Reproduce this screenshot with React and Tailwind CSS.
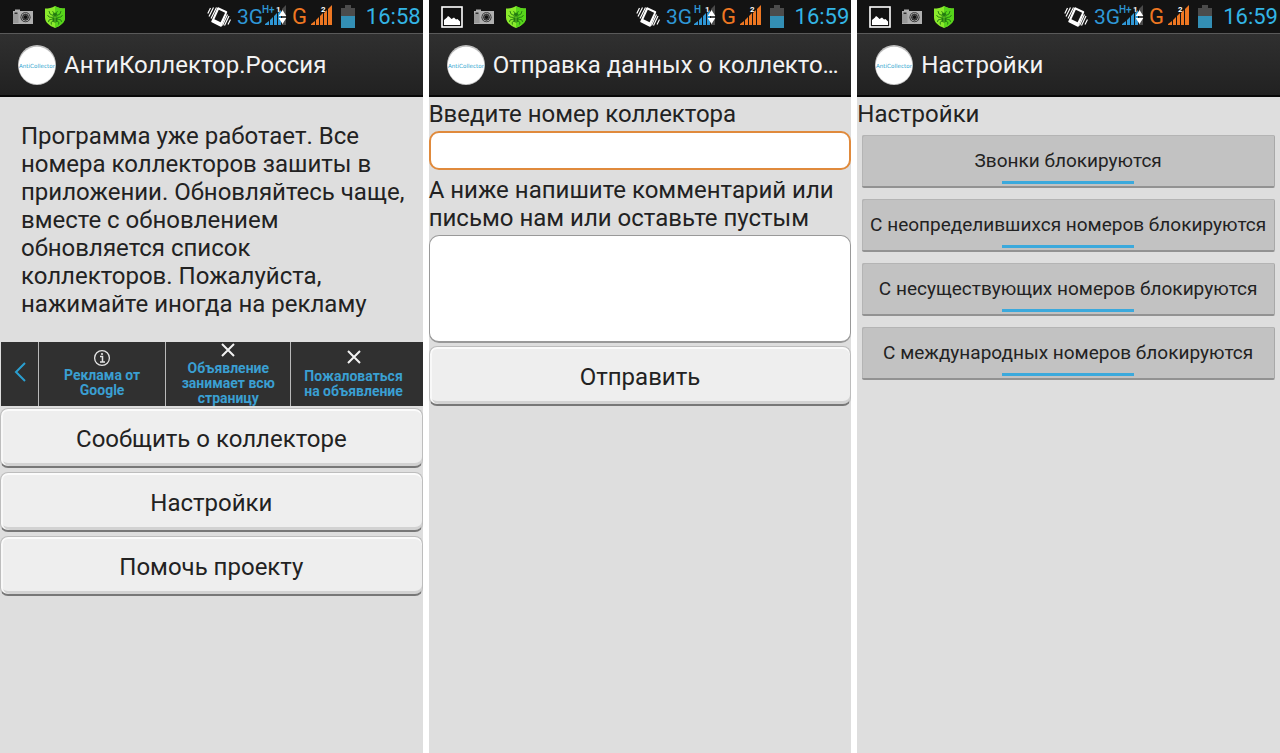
import React from "react";

function PictureIcon() {
  return (
    <svg width="22" height="22" viewBox="0 0 22 22" aria-hidden="true">
      <rect x="1" y="1" width="20" height="20" fill="#111" stroke="#fff" strokeWidth="1.6" />
      <path d="M3 19v-5l3-2.500 1-1.500 1.500 1 2 2L13 11.500l2 2 1.500-.5L19 15.500V19z" fill="#fff" />
    </svg>
  );
}

function CameraIcon() {
  return (
    <svg width="22" height="16" viewBox="0 0 22 16" aria-hidden="true">
      <path d="M3 2V.5h5V2h13v13H1V2z" fill="#b0b0b0" />
      <path d="M1 5h5.500v9H1z" fill="#999" />
      <rect x="2.500" y="3.500" width="3" height="1.500" fill="#333" />
      <circle cx="13.500" cy="8.200" r="5" fill="#222" />
      <circle cx="13.500" cy="8.200" r="3.900" fill="none" stroke="#b8b8b8" strokeWidth=".9" />
      <circle cx="13.500" cy="8.200" r="2.200" fill="#111" stroke="#777" strokeWidth=".6" />
    </svg>
  );
}

function ShieldIcon() {
  return (
    <svg width="22" height="24" viewBox="0 0 22 24" aria-hidden="true">
      <path d="M11 1c3 2 6.500 2.500 10 2.500v9c0 5-4.500 8.300-10 10.500C5.500 20.800 1 17.500 1 12.500v-9C4.500 3.500 8 3 11 1z" fill="#8bea2c" />
      <path d="M11 1c3 2 6.500 2.500 10 2.500v9c0 5-4.500 8.300-10 10.500z" fill="#57d51b" />
      <g fill="none" stroke="#237a10" strokeWidth=".9">
        <path d="M9 10.500 6 9 5 6M13 10.500 16 9l1-3M8.500 12.500l-3.500-.5-1.500-2M13.500 12.500l3.500-.5 1.500-2M8.500 14 5 15l-.5 2M13.500 14l3.500 1 .5 2M9 16l-2 1.500.5 2M13 16l2 1.500-.5 2" />
      </g>
      <ellipse cx="11" cy="13.800" rx="2.700" ry="3.700" fill="#237a10" />
      <path d="M9 10a2 2 0 0 1 4 0zM8.500 6l1.500 2.500M13.500 6 12 8.500" fill="#237a10" stroke="#237a10" strokeWidth=".8" />
      <path d="M8.500 12h5M11 12v5" stroke="#79df2a" strokeWidth=".7" />
    </svg>
  );
}

function VibrateIcon() {
  return (
    <svg width="24" height="22" viewBox="0 0 24 22" aria-hidden="true">
      <path d="M11 2 19.500 6 14 20 5 15.500z" fill="#fff" stroke="#fff" strokeWidth="1.500" strokeLinejoin="round" />
      <path d="m11.800 3.800 6.300 3-4.500 9.400-6.200-3z" fill="#151515" />
      <path d="M6.500 1.500 2 10.500M3.500 2 .8 7.500M9.500 1.500 4 12.500M22 10l-4.500 9.500M23.500 13.500l-2.500 5M20.500 8.500 15.500 19.500" stroke="#fff" strokeWidth="1.200" />
    </svg>
  );
}

function MobileSignal({ label }) {
  return (
    <svg width="51" height="24" viewBox="0 0 51 24" role="img" aria-label={"3G " + label}>
      <text x="0" y="18.500" fontFamily="Roboto, sans-serif" fontSize="21" fill="#2f97d6">3G</text>
      <text x={label === "H" ? 28 : 25} y="8" fontFamily="Roboto, sans-serif" fontSize="10" fontWeight="500" fill="#2f97d6">{label}</text>
      <path d="M28 20v-1l4-3v4zM33 20v-5l3-3v8zM37 20v-9l3-3v12zM41 20V8l3-3v15z" fill="#2f97d6" />
      <path d="M45 20V4l4-4v20z" fill="#4a4a4a" />
      <text x="39" y="7" fontFamily="Roboto, sans-serif" fontSize="8" fontWeight="700" fill="#fff">1</text>
      <path d="m45.500 5 3.800 6h-7.600zM45.500 19l-3.800-6h7.600z" fill="#fff" />
    </svg>
  );
}

function SecondSignal() {
  return (
    <svg width="40" height="24" viewBox="0 0 40 24" role="img" aria-label="G">
      <text x="-1" y="18.500" fontFamily="Roboto, sans-serif" fontSize="22" fill="#ee7722">G</text>
      <path d="M18 20v-1l4-3v4zM23 20v-5l3-3v8zM27 20v-9l3-3v12zM31 20V8l3-3v15zM35 20V4l4-4v20z" fill="#ee7722" />
      <text x="28" y="7" fontFamily="Roboto, sans-serif" fontSize="8" fontWeight="700" fill="#fff">2</text>
    </svg>
  );
}

function BatteryIcon() {
  return (
    <svg width="14" height="24" viewBox="0 0 14 24" aria-hidden="true">
      <path d="M4 0h6v3h4v8H0V3h4z" fill="#4b4b4b" />
      <path d="M0 11h14v12H0z" fill="#338fb5" />
    </svg>
  );
}

function StatusBar({ time, network, picture }) {
  return (
    <div className="flex h-[33px] items-center justify-between bg-[#131313] pl-[12px] pr-[2px]">
      <div className="flex items-center gap-[10px]">
        {picture && <PictureIcon />}
        <CameraIcon />
        <ShieldIcon />
      </div>
      <div className="flex items-center">
        <VibrateIcon />
        <div className="flex items-center gap-[5px] pl-[6px]">
          <MobileSignal label={network} />
          <SecondSignal />
        </div>
        <div className="pl-[8px]"><BatteryIcon /></div>
        <span className="pl-[11px] text-[22px] leading-[33px] text-[#33b5e5]">{time}</span>
      </div>
    </div>
  );
}

function ActionBar({ title }) {
  return (
    <header className="flex h-[64px] items-center gap-[8px] border-t border-b-2 border-t-[#5a5a5a] border-b-[#080808] bg-linear-to-b from-[#303030] to-[#212121] pl-[18px] pr-[8px]">
      <svg className="shrink-0" width="38" height="40" viewBox="0 0 38 40" aria-hidden="true">
        <ellipse cx="19" cy="20" rx="19" ry="20" fill="#bdbdbd" />
        <ellipse cx="19" cy="20.500" rx="18.300" ry="18.800" fill="#fff" />
        <text x="19" y="22.500" textAnchor="middle" fontFamily="DejaVu Sans, sans-serif" fontSize="5.600" fill="#2fa5cf">AntiCollector</text>
      </svg>
      <h1 className="min-w-0 truncate text-[24px] leading-[32px] text-[#f3f3f3]">{title}</h1>
    </header>
  );
}

function Phone({ time, network, picture, title, children }) {
  return (
    <section className="flex min-w-0 flex-col bg-[#dedede]">
      <StatusBar time={time} network={network} picture={picture} />
      <ActionBar title={title} />
      {children}
    </section>
  );
}

function PushButton({ children }) {
  return (
    <button
      type="button"
      className="h-[60px] w-full rounded-[8px] border border-b-2 border-[#bdbdbd] border-b-[#777] bg-[#eeeeee] pt-[2px] text-center text-[24px] leading-[28px] shadow-[inset_0_2px_0_#fbfbfb,inset_2px_0_0_#f8f8f8,inset_0_-3px_0_#d2d2d2]"
    >
      {children}
    </button>
  );
}

function InfoIcon() {
  return (
    <svg width="18" height="18" viewBox="0 0 18 18" aria-hidden="true">
      <circle cx="9" cy="9" r="7.400" fill="none" stroke="#e4e4e4" strokeWidth="1.300" />
      <path d="M7 7.500h2.500V13M7 13h5" fill="none" stroke="#e4e4e4" strokeWidth="1.500" />
      <circle cx="9" cy="5" r="1.100" fill="#e4e4e4" />
    </svg>
  );
}

function CrossIcon() {
  return (
    <svg className="shrink-0" width="14" height="14" viewBox="0 0 14 14" aria-hidden="true">
      <path d="m1 1 12 12M13 1 1 13" stroke="#f2f2f2" strokeWidth="2" />
    </svg>
  );
}

function AdBar() {
  const cell = "flex flex-col items-center border-l border-[#b9b9b9] text-center";
  return (
    <div className="ml-px grid h-[64px] grid-cols-[37px_127fr_125fr_132fr] bg-[#303030] text-[14px] font-bold leading-[15px] text-[#3a9fd2]">
      <button type="button" aria-label="Назад" className="flex items-center justify-center pb-[4px]">
        <svg width="12" height="20" viewBox="0 0 12 20" aria-hidden="true">
          <path d="m11 1-9 9 9 9" fill="none" stroke="#2a9fd0" strokeWidth="2" />
        </svg>
      </button>
      <button type="button" className={cell + " gap-px pt-[7px]"}>
        <InfoIcon />
        <span>Реклама от<br />Google</span>
      </button>
      <button type="button" className={cell + " gap-[4px] pt-px"}>
        <CrossIcon />
        <span>Объявление<br />занимает всю<br />страницу</span>
      </button>
      <button type="button" className={cell + " gap-[5px] pr-[7px] pt-[8px]"}>
        <CrossIcon />
        <span>Пожаловаться<br />на объявление</span>
      </button>
    </div>
  );
}

function SettingToggle({ children }) {
  return (
    <button
      type="button"
      aria-pressed="true"
      className="flex h-[53px] w-full flex-col items-center justify-end rounded-[2px] border-b-2 border-r border-b-[#929292] border-r-[#a8a8a8] bg-[#c2c2c2] text-[19px] leading-[22px] shadow-[inset_1px_1px_0_#b4b4b4]"
    >
      <span className="whitespace-nowrap pb-[9px]">{children}</span>
      <span className="mb-[2px] h-[3px] w-[132px] bg-[#3ba9dc]" />
    </button>
  );
}

export default function App() {
  return (
    <main className="grid min-h-screen grid-cols-3 gap-[6px] bg-white font-[Roboto,sans-serif] text-[#222]">
      <Phone time="16:58" network="H+" title="АнтиКоллектор.Россия">
        <p className="pb-[24px] pl-[21px] pr-[16px] pt-[25px] text-[24px] leading-[28px]">
          Программа уже работает. Все номера коллекторов зашиты в приложении. Обновляйтесь чаще, вместе с обновлением обновляется список коллекторов. Пожалуйста, нажимайте иногда на рекламу
        </p>
        <AdBar />
        <div className="flex flex-col gap-[4px] pt-[2px]">
          <PushButton>Сообщить о коллекторе</PushButton>
          <PushButton>Настройки</PushButton>
          <PushButton>Помочь проекту</PushButton>
        </div>
      </Phone>

      <Phone time="16:59" network="H" picture title="Отправка данных о коллекто…">
        <form className="flex flex-col" onSubmit={(e) => e.preventDefault()}>
          <label htmlFor="number" className="pb-[3px] pt-[3px] text-[24px] leading-[28px]">
            Введите номер коллектора
          </label>
          <input
            id="number"
            type="text"
            className="h-[39px] w-full rounded-[10px] border-2 border-[#e08a3c] bg-white px-[8px] text-[20px] outline-none"
          />
          <label htmlFor="comment" className="pb-[3px] pt-[6px] text-[24px] leading-[28px]">
            А ниже напишите комментарий или письмо нам или оставьте пустым
          </label>
          <textarea
            id="comment"
            className="mb-[3px] block h-[108px] w-full resize-none rounded-[10px] border border-b-2 border-[#999] bg-white p-[8px] text-[20px] outline-none"
          />
          <PushButton>Отправить</PushButton>
        </form>
      </Phone>

      <Phone time="16:59" network="H+" picture title="Настройки">
        <h2 className="pt-[3px] text-[24px] leading-[28px]">Настройки</h2>
        <div className="flex flex-col gap-[11px] px-[5px] pt-[7px]">
          <SettingToggle>Звонки блокируются</SettingToggle>
          <SettingToggle>С неопределившихся номеров блокируются</SettingToggle>
          <SettingToggle>С несуществующих номеров блокируются</SettingToggle>
          <SettingToggle>С международных номеров блокируются</SettingToggle>
        </div>
      </Phone>
    </main>
  );
}
